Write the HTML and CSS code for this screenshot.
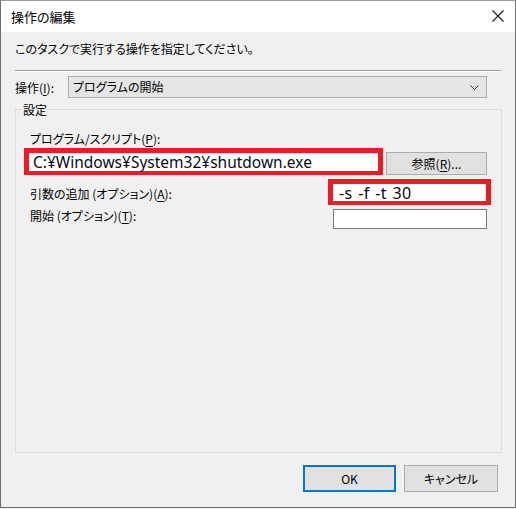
FILE: index.html
```html
<!DOCTYPE html>
<html lang="ja">
<head>
<meta charset="utf-8">
<title>操作の編集</title>
<link rel="stylesheet" href="styles.css">
</head>
<body>
<div class="window">
  <div class="titlebar">
    <span class="title">操作の編集</span>
    <svg class="close" width="12" height="12" viewBox="0 0 12 12"><path d="M0.5 0.5L11.5 11.5M11.5 0.5L0.5 11.5" stroke="#1a1a1a" stroke-width="1.1" fill="none"/></svg>
  </div>
  <div class="content">
    <p class="intro">このタスクで実行する操作を指定してください。</p>
    <div class="separator"></div>
    <div class="action-row">
      <span class="label">操作(<u>I</u>):</span>
      <div class="combo">
        <span>プログラムの開始</span>
        <svg width="9" height="5" viewBox="0 0 9 5"><path d="M0.5 0.5L4.5 4.5L8.5 0.5" stroke="#333" stroke-width="1" fill="none"/></svg>
      </div>
    </div>
    <div class="group">
      <span class="legend">設定</span>
      <div class="label">プログラム/スクリプト(<u>P</u>):</div>
      <div class="row row-path">
        <div class="redbox path">C:¥Windows¥System32¥shutdown.exe</div>
        <div class="button browse">参照(<u>R</u>)...</div>
      </div>
      <div class="row row-args">
        <span class="label args-label">引数の追加 (オプション)(<u>A</u>):</span>
        <div class="redbox args">-s -f -t 30</div>
      </div>
      <div class="row row-start">
        <span class="label start-label">開始 (オプション)(<u>T</u>):</span>
        <div class="textbox"></div>
      </div>
    </div>
    <div class="footer">
      <div class="button ok">OK</div>
      <div class="button cancel">キャンセル</div>
    </div>
  </div>
</div>
</body>
</html>
```

FILE: styles.css
```css
* { box-sizing: border-box; }
html, body { margin: 0; padding: 0; background: #f0f0f0; }
body {
  width: 516px;
  height: 509px;
  font-family: "Noto Sans CJK JP", "Noto Sans", sans-serif;
  font-size: 12px;
  color: #000;
  font-feature-settings: "palt";
}
u { text-decoration-thickness: 1px; text-underline-offset: 2px; }
.window {
  width: 516px;
  height: 508px;
  border: 1px solid #707070;
  border-top-color: #9a9a9a;
  display: flex;
  flex-direction: column;
  background: #f0f0f0;
}
.titlebar {
  height: 31px;
  background: #fff;
  display: flex;
  align-items: center;
  justify-content: space-between;
  padding: 0 11px 0 10px;
  flex: none;
}
.title { font-size: 13px; line-height: 16px; color: #000; }
.close { display: block; margin-top: -1px; }
.content {
  flex: 1;
  display: flex;
  flex-direction: column;
  padding: 0 14px 0 14px;
}
.intro { margin: 9px 0 0 0; line-height: 16px; }
.separator {
  height: 2px;
  margin-top: 13px;
  border-top: 1px solid #a0a0a0;
  border-bottom: 1px solid #ffffff;
}
.action-row {
  display: flex;
  align-items: center;
  margin-top: 4px;
  height: 22px;
}
.label { line-height: 16px; white-space: nowrap; }
.action-row .label { width: 53px; padding-top: 1px; }
.combo {
  width: 419px;
  height: 22px;
  border: 1px solid #adadad;
  background: #e5e5e5;
  display: flex;
  align-items: center;
  justify-content: space-between;
  padding: 0 7px 0 4px;
  line-height: 16px;
}
.combo svg { display: block; margin-top: 1px; }
.group {
  position: relative;
  margin-top: 11px;
  margin-right: -1px;
  height: 344px;
  border: 1px solid #dcdcdc;
  padding: 21px 14px 0 14px;
}
.legend {
  position: absolute;
  top: -8px;
  left: 6px;
  padding: 0 1px;
  background: #f0f0f0;
  line-height: 16px;
}
.row { display: flex; }
.row-path {
  align-items: flex-end;
  margin-top: 1px;
  margin-left: -6px;
  margin-right: 0;
}
.redbox {
  border: 5px solid #ed1c24;
  background: #fff;
  font-family: "Noto Sans", "Open Sans", sans-serif;
  font-size: 15.5px;
  color: #0a0a1a;
  display: flex;
  align-items: center;
  white-space: nowrap;
  font-feature-settings: normal;
}
.path {
  width: 359px;
  height: 27px;
  padding-left: 4px;
  border-bottom-width: 4px;
}
.button {
  background: #e1e1e1;
  border: 1px solid #adadad;
  display: flex;
  align-items: center;
  justify-content: center;
  line-height: 16px;
}
.browse {
  width: 101px;
  height: 23px;
  margin-left: 3px;
  margin-bottom: 0;
}
.row-args {
  margin-top: 4px;
  justify-content: space-between;
  align-items: flex-start;
  margin-right: -4px;
}
.args-label { padding-top: 7px; }
.args {
  width: 163px;
  height: 26px;
  padding-left: 6px;
  border-bottom-width: 4px;
  font-size: 16px;
  letter-spacing: 0.4px;
  word-spacing: 1px;
}
.row-start {
  margin-top: 4px;
  justify-content: space-between;
  align-items: flex-start;
}
.start-label { margin-top: -1px; }
.textbox {
  width: 154px;
  height: 20px;
  border: 1px solid #7a7a7a;
  background: #fff;
}
.footer {
  display: flex;
  justify-content: flex-end;
  gap: 8px;
  margin-top: 12px;
  margin-right: 3px;
}
.footer .button { height: 27px; }
.ok { width: 93px; border: 2px solid #0078d7; }
.cancel { width: 94px; }
```
